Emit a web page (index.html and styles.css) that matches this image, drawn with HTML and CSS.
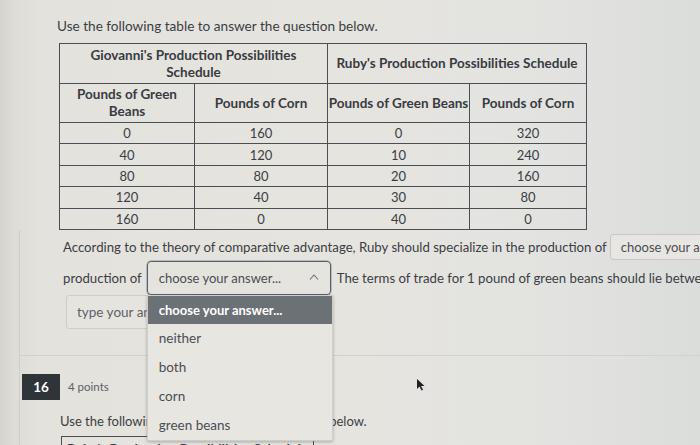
FILE: index.html
```html
<!DOCTYPE html>
<html lang="en">
<head>
<meta charset="utf-8">
<title>Comparative advantage question</title>
<link rel="stylesheet" href="styles.css">
</head>
<body>
<div class="page">
  <div class="edge"></div>
  <section class="question">
    <p class="intro">Use the following table to answer the question below.</p>
    <table class="pps">
      <colgroup><col class="c1"><col class="c2"><col class="c3"><col class="c4"></colgroup>
      <tr class="h1">
        <th colspan="2">Giovanni's Production Possibilities<br>Schedule</th>
        <th colspan="2">Ruby's Production Possibilities Schedule</th>
      </tr>
      <tr class="h2">
        <th>Pounds of Green<br>Beans</th>
        <th>Pounds of Corn</th>
        <th>Pounds of Green Beans</th>
        <th>Pounds of Corn</th>
      </tr>
      <tr><td>0</td><td>160</td><td>0</td><td>320</td></tr>
      <tr><td>40</td><td>120</td><td>10</td><td>240</td></tr>
      <tr><td>80</td><td>80</td><td>20</td><td>160</td></tr>
      <tr><td>120</td><td>40</td><td>30</td><td>80</td></tr>
      <tr><td>160</td><td>0</td><td>40</td><td>0</td></tr>
    </table>
    <div class="line l1">
      <span>According to the theory of comparative advantage, Ruby should specialize in the production of</span>
      <span class="select closed">choose your answer...</span>
    </div>
    <div class="line l2">
      <span>production of</span>
      <span class="select open">
        <span class="sel-text">choose your answer...</span>
        <svg class="chev" width="10" height="6" viewBox="0 0 10 6"><path d="M1 5.5 L5 1 L9 5.5" fill="none" stroke="#6a6e73" stroke-width="1.1"/></svg>
        <ul class="menu">
          <li class="active">choose your answer...</li>
          <li>neither</li>
          <li>both</li>
          <li>corn</li>
          <li>green beans</li>
        </ul>
      </span>
      <span>The terms of trade for 1 pound of green beans should lie between</span>
    </div>
    <div class="line l3">
      <span class="textbox">type your answer...</span>
    </div>
  </section>
  <div class="sep"></div>
  <section class="question q16">
    <div class="qhead">
      <span class="num">16</span>
      <span class="points">4 points</span>
    </div>
    <p class="intro2">Use the following table to answer the question below.</p>
    <table class="pps small">
      <tr class="h1"><th>Ruby's Production Possibilities Schedule</th></tr>
    </table>
  </section>
  <svg class="cursor" width="9" height="13" viewBox="0 0 9 13"><path d="M1 1 L1 11 L3.5 8.5 L5.5 12.5 L7 11.8 L5 8 L8.5 8 Z" fill="#1e2024"/></svg>
</div>
</body>
</html>
```
FILE: styles.css
```css
html, body {
  margin: 0;
  padding: 0;
  width: 700px;
  height: 445px;
  overflow: hidden;
}
body {
  font-family: Lato, "Open Sans", sans-serif;
  color: #3a3e44;
}
.page {
  position: relative;
  width: 700px;
  height: 445px;
  overflow: hidden;
  background: linear-gradient(to right, #d6d4cf 0px, #dedcd7 14px, #e4e2dd 40px, #e6e4df 50%, #e2e3e0 80%, #dbdddb 100%);
}
.edge {
  position: absolute;
  left: 19px;
  top: 230px;
  width: 1px;
  height: 215px;
  background: #cfcdc8;
}
.cursor {
  position: absolute;
  left: 416px;
  top: 378px;
}
.question {
  padding-left: 57px;
  white-space: nowrap;
}
.intro {
  margin: 0;
  padding-top: 17px;
  font-size: 13.6px;
  line-height: 18px;
}
.pps {
  margin: 8px 0 0 2px;
  border-collapse: collapse;
  table-layout: fixed;
  width: 527px;
  color: #3a3d42;
}
.pps col.c1 { width: 135px; }
.pps col.c2 { width: 133px; }
.pps col.c3 { width: 142px; }
.pps col.c4 { width: 117px; }
.pps th, .pps td {
  border: 1px solid #4c4e56;
  text-align: center;
  padding: 0;
}
.pps th {
  font-weight: 700;
  font-size: 13.5px;
  line-height: 17px;
  color: #383b41;
}
.pps tr.h1 th { height: 39px; }
.pps tr.h2 th { height: 38px; }
.pps td {
  font-size: 13px;
  height: 20.4px;
  line-height: 16px;
}
.line {
  display: flex;
  align-items: center;
  font-size: 13.2px;
  margin-left: 6px;
}
.line > * { flex-shrink: 0; }
.l1 { height: 26px; margin-top: 4px; gap: 3px; }
.l2 { height: 34px; margin-top: 1px; }
.l3 { height: 34px; margin-top: 0px; margin-left: 9px; }
.select {
  box-sizing: border-box;
  display: inline-flex;
  align-items: center;
  height: 100%;
  color: #4a4d52;
  font-size: 13px;
}
.select.closed {
  border: 1px solid #c9c7c2;
  border-radius: 3px;
  padding-left: 10px;
  width: 140px;
  height: 26px;
  background: #e8e6e2;
}
.select.open {
  position: relative;
  width: 184px;
  border: 1px solid #56606c;
  border-radius: 4px;
  padding-left: 11px;
  margin: 0 6px 0 5px;
  justify-content: space-between;
  padding-right: 11px;
  box-shadow: 0 0 0 0.5px #8a9099;
}
.chev { margin-top: -2px; }
.menu {
  position: absolute;
  left: -1px;
  top: 33px;
  width: 184px;
  margin: 0;
  padding: 0;
  list-style: none;
  background: #e8e6e1;
  box-shadow: 0 1px 3px rgba(60,60,60,0.35);
  border: 1px solid #cfcdc8;
  z-index: 5;
}
.menu li {
  height: 29px;
  line-height: 29px;
  padding-left: 11px;
  font-size: 13.5px;
  color: #4a4d52;
}
.menu li.active {
  background: #6b7175;
  color: #ffffff;
  font-weight: 700;
  font-size: 13px;
  height: 28px;
  line-height: 28px;
}
.textbox {
  box-sizing: border-box;
  display: inline-flex;
  align-items: center;
  height: 34px;
  width: 150px;
  border: 1px solid #cfcdc8;
  border-radius: 3px;
  padding-left: 10px;
  font-size: 13.5px;
  color: #5d6166;
  background: #e6e4df;
}
.sep {
  margin: 26px 0 0 20px;
  height: 1px;
  background: #d3d1cc;
}
.q16 {
  padding-left: 22px;
}
.qhead {
  display: flex;
  align-items: center;
  gap: 8px;
  margin-top: 18px;
}
.num {
  display: inline-flex;
  align-items: center;
  justify-content: center;
  width: 38px;
  height: 26px;
  background: #2e3438;
  color: #ffffff;
  font-weight: 700;
  font-size: 13.5px;
}
.points {
  font-size: 11.5px;
  color: #5b5f64;
}
.intro2 {
  margin: 12px 0 0 38px;
  font-size: 13px;
  line-height: 18px;
}
.pps.small {
  margin: 6px 0 0 39px;
  width: 253px;
}
.pps.small th {
  height: 30px;
  vertical-align: top;
  padding-top: 4px;
  border-bottom: none;
}
```
